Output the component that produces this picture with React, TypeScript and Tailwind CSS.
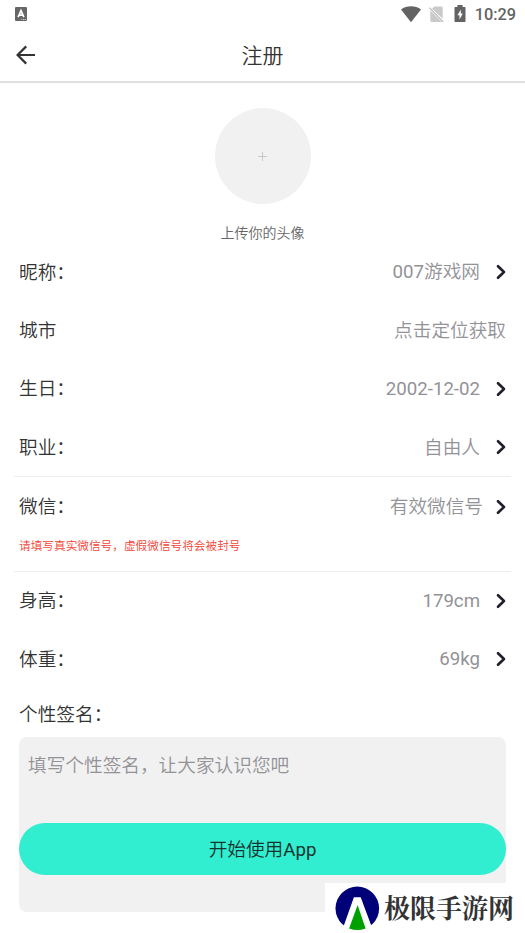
import { useState, type ReactNode } from "react";

// Define the props interface
interface FieldRowProps {
    label: string;
    value: ReactNode;
    hasArrow?: boolean;
    valueClass?: string;
}

const ChevronIcon = () => (
    <svg width="10" height="16" viewBox="0 0 10 16" fill="none" className="shrink-0">
        <path d="M2 2.2L8 8L2 13.8" stroke="#1f1f2e" strokeWidth="2.6" strokeLinecap="round" strokeLinejoin="round" />
    </svg>
);

function FieldRow({ label, value, hasArrow = true, valueClass = "mr-4 pt-px" }: FieldRowProps) {
    return (
        <div className="flex h-[58.35px] items-center justify-between px-[19px] text-[18.67px]">
            <span className="pt-px text-[#333333]">{label}</span>
            <div className="flex items-center">
                <span className={`text-[#929297] ${valueClass}`}>{value}</span>
                {hasArrow && <ChevronIcon />}
            </div>
        </div>
    );
}

function StatusBar() {
    return (
        <div className="flex h-7 items-center justify-between pl-[15px] pr-[9px]">
            <svg width="12" height="14" viewBox="0 0 12 14">
                <rect width="12" height="14" rx="1" fill="#666666" />
                <path d="M3.1 10.2L6 3.7L8.9 10.2M4.3 8.2H7.7" stroke="#ffffff" strokeWidth="1.7" fill="none" />
                <path d="M6.2 12.5H11" stroke="#cccccc" strokeWidth="1" strokeDasharray="1.2 0.6" />
            </svg>
            <div className="flex items-center">
                <svg width="20" height="17" viewBox="0 0 20 17" className="mt-px">
                    <path d="M0 3.5C5.5 -0.7 14.5 -0.7 20 3.5L10 16.3Z" fill="#636363" />
                </svg>
                <svg width="15" height="17" viewBox="0 0 15 17" className="ml-[8px] mt-px">
                    <path d="M5.5 0.5H12.3Q13.7 0.5 13.7 1.9V12.8L3 2.4ZM1.3 4.2L12.9 16H2.7Q1.3 16 1.3 14.6Z" fill="#c9c9c9" />
                    <path d="M0.5 1.7L14.2 15.8" stroke="#b8b8b8" strokeWidth="1.2" />
                </svg>
                <svg width="12" height="17" viewBox="0 0 12 17" className="ml-[10px]">
                    <path d="M3.4 0H8.6V2H10.7Q11.5 2 11.5 2.8V16.2Q11.5 17 10.7 17H1.3Q0.5 17 0.5 16.2V2.8Q0.5 2 1.3 2H3.4Z" fill="#636363" />
                    <path d="M6.8 4.4L3.4 10.2H5.5V14.6L8.8 8.6H6.8Z" fill="#ffffff" />
                </svg>
                <span className="ml-[9px] mt-0.5 text-[16.3px] font-medium leading-none text-[#636363]">10:29</span>
            </div>
        </div>
    );
}

function Watermark() {
    return (
        <div className="absolute bottom-0 right-0 flex h-[50px] w-[200px] items-center bg-white pl-2.5">
            <svg width="45" height="45" viewBox="0 0 45 45" className="shrink-0">
                <circle cx="22.3" cy="22.3" r="21.8" fill="#000078" />
                <path d="M18.9 11.2H25.7L38.3 45H6.9Z" fill="#ffffff" />
                <path d="M22.6 19L30.6 42.4Q22.4 45.6 14.1 42.4Z" fill="#00a000" />
            </svg>
            <span className="mb-0.5 ml-1 whitespace-nowrap font-['Noto_Serif_CJK_SC','Noto_Sans_CJK_SC',serif] text-[26px] font-bold leading-none text-[#333333]">极限手游网</span>
        </div>
    );
}

function App() {
    const [signature, setSignature] = useState<string>("");

    return (
        <div lang="zh-CN" className="relative h-[933px] w-[525px] overflow-hidden bg-white font-['Roboto','Noto_Sans_CJK_SC',sans-serif] font-[350]">
            <StatusBar />
            {/* Title bar */}
            <header className="grid h-[55px] grid-cols-[60px_1fr_60px] items-center border-b-2 border-[#e0e0e0]">
                <button className="pl-4" aria-label="返回">
                    <svg width="20" height="20" viewBox="0 0 20 20" fill="none">
                        <path d="M19 10H2M10.2 1.4L1.6 10L10.2 18.6" stroke="#333333" strokeWidth="2.2" />
                    </svg>
                </button>
                <h1 className="pt-[5px] text-center text-[21px] font-[350] text-[#333333]">注册</h1>
            </header>

            {/* Avatar */}
            <div className="flex h-[160px] flex-col items-center pt-[25px]">
                <button className="flex size-24 shrink-0 items-center justify-center rounded-full bg-[#f1f1f1]" aria-label="上传你的头像">
                    <svg width="9" height="9" viewBox="0 0 9 9">
                        <path d="M4.5 0V9M0 4.5H9" stroke="#c8c8c8" strokeWidth="1" />
                    </svg>
                </button>
                <p className="mt-[19px] text-[14px] leading-[21px] text-[#666666]">上传你的头像</p>
            </div>

            <FieldRow label="昵称：" value={<><span className="font-normal">007</span>游戏网</>} valueClass="mr-4" />
            <FieldRow label="城市" value="点击定位获取" hasArrow={false} valueClass="pt-px" />
            <FieldRow label="生日：" value="2002-12-02" valueClass="mr-4 font-normal" />
            <FieldRow label="职业：" value="自由人" />

            <div className="mx-3.5 h-px bg-[#eeeeee]" />
            <FieldRow label="微信：" value="有效微信号" valueClass="mr-[13px] pt-px" />
            <p className="h-[35px] px-[19px] text-[11.67px] leading-5 text-[#f44336]">请填写真实微信号，虚假微信号将会被封号</p>
            <div className="mx-3.5 h-px bg-[#eeeeee]" />

            <FieldRow label="身高：" value="179cm" valueClass="mr-4 font-normal" />
            <FieldRow label="体重：" value="69kg" valueClass="mr-4 font-normal" />

            {/* Signature */}
            <div className="px-[19px]">
                <label htmlFor="signature" className="block h-[48.8px] pt-[13px] text-[18.67px] leading-7 text-[#333333]">个性签名：</label>
                <textarea
                    id="signature"
                    value={signature}
                    onChange={(e) => setSignature(e.target.value)}
                    placeholder="填写个性签名，让大家认识您吧"
                    className="block h-[175px] w-full resize-none rounded-lg bg-[#f1f1f1] px-[9px] pt-[15px] text-[18.67px] leading-7 outline-none placeholder:text-[#929297]"
                />
            </div>

            <button className="absolute left-[19px] right-[19px] top-[823px] h-[52px] rounded-full bg-[#31eed0] pt-px text-[18.67px] text-[#17332e]">
                开始使用<span className="font-normal">App</span>
            </button>
            <Watermark />
        </div>
    );
}

export default App;
